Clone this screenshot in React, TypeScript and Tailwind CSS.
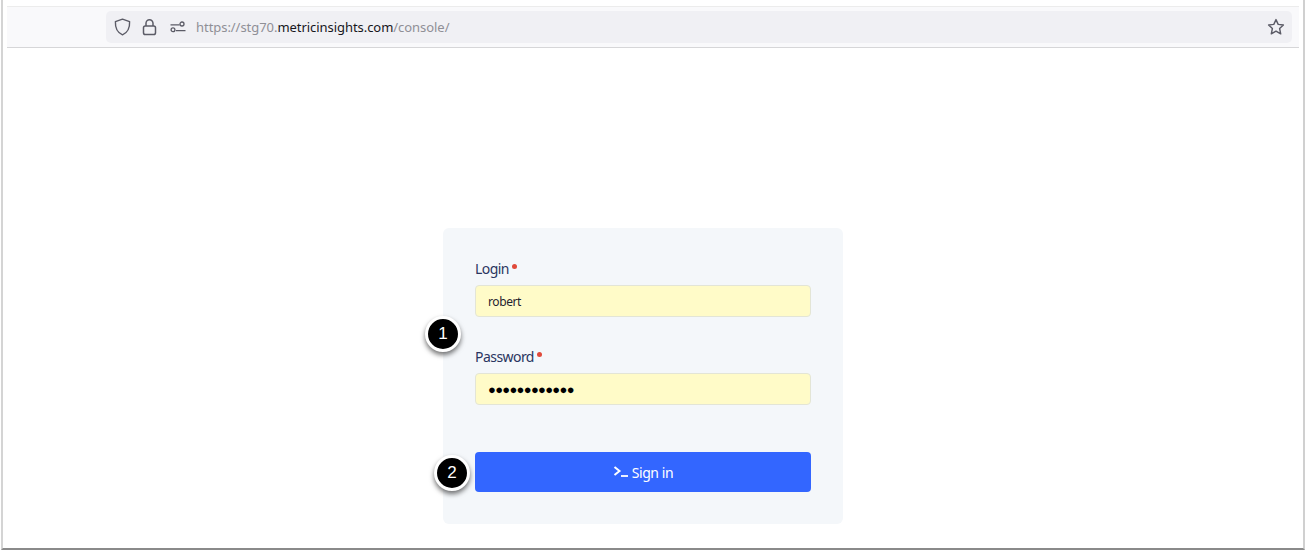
function Field({ label, value, dots }: { label: string; value: string; dots?: boolean }) {
  return (
    <div>
      <div className="flex h-[24px] items-center text-[14px] leading-[24px] tracking-[-0.55px] text-[#2a3560]">
        {label}
        <span className="ml-[3px] mb-[5px] size-[5px] rounded-full bg-[#e04a3a]" />
      </div>
      <div
        className={`mt-[4px] flex h-[32px] items-center rounded-[4px] border border-[#e3e5d6] bg-[#fffbc8] pt-[1px] pl-[12px] text-[#1f2430] ${
          dots ? "text-[13px] font-bold tracking-[-0.7px] text-black" : "text-[12px] tracking-[-0.4px]"
        }`}
      >
        {value}
      </div>
    </div>
  );
}

function Badge({ n, className }: { n: number; className: string }) {
  return (
    <div
      className={`absolute flex size-[36px] items-center justify-center rounded-full border-[3px] border-white bg-black text-[17px] text-white shadow-[0_3px_5px_rgba(0,0,0,0.55)] ${className}`}
      style={{ fontFamily: '"Liberation Sans", sans-serif' }}
    >
      {n}
    </div>
  );
}

export default function App() {
  return (
    <div className="h-[551px] w-[1306px] bg-white pl-[1px]" style={{ fontFamily: '"Noto Sans", sans-serif' }}>
      <div className="h-[550px] w-[1304px] border-r-2 border-b-2 border-l-2 border-r-[#d0d0d0] border-b-[#8a8a8a] border-l-[#d4d4d4] pt-[6px] pl-[4px] pr-[4px]">
        <div className="flex h-[42px] items-center border-t border-b border-t-[#ececec] border-b-[#d6d6d8] bg-[#f9f9fb] pr-[7px] pl-[99px]">
          <div className="flex h-[32px] flex-1 items-center rounded-[5px] bg-[#f0f0f4] pl-[8px] pr-[7px]">
            <svg width="17" height="18" viewBox="0 0 17 18" fill="none" stroke="#5b5b66" strokeWidth="1.4" strokeLinejoin="round">
              <path d="M8.5 1.2 15.6 3.6C15.9 9.8 13.6 14.6 8.5 16.8 3.4 14.6 1.1 9.8 1.4 3.6Z" />
            </svg>
            <svg width="15" height="18" viewBox="0 0 15 18" fill="none" stroke="#5b5b66" strokeWidth="1.5" strokeLinejoin="round" className="ml-[11px]">
              <path d="M4 8V5.2a3.5 3.5 0 0 1 7 0V8" />
              <rect x="1.5" y="8" width="12" height="8.5" rx="1.8" />
            </svg>
            <svg width="16" height="12" viewBox="0 0 16 12" fill="none" stroke="#5b5b66" strokeWidth="1.3" className="ml-[13px]">
              <circle cx="12" cy="3" r="2" />
              <circle cx="3" cy="8.8" r="1.9" />
              <path d="M0.5 3.8H9.5M5.8 9.6H15.5" />
            </svg>
            <div className="ml-[10px] pt-[1px] text-[13px] tracking-[-0.05px] text-[#8f8f96]">
              https://stg70.<span className="text-[#17171c]">metricinsights.com</span>/console/
            </div>
            <svg width="18" height="18" viewBox="0 0 18 18" fill="none" stroke="#5b5b66" strokeWidth="1.4" strokeLinejoin="round" className="ml-auto">
              <path d="M9 1.6 11.2 6.4 16.4 7 12.6 10.5 13.7 15.8 9 13.1 4.3 15.8 5.4 10.5 1.6 7 6.8 6.4Z" />
            </svg>
          </div>
        </div>
        <div className="pt-[180px] pl-[436px]">
          <div className="relative h-[296px] w-[400px] rounded-[6px] bg-[#f4f7fa] px-[32px] pt-[29px]">
            <Field label="Login" value="robert" />
            <div className="mt-[28px]">
              <Field label="Password" value="●●●●●●●●●●●●" dots />
            </div>
            <button className="mt-[47px] flex h-[40px] w-full items-center justify-center rounded-[4px] bg-[#3366ff] text-[14px] tracking-[-0.4px] text-white">
              <svg width="16" height="12" viewBox="0 0 16 12" fill="none" stroke="white" className="mr-[3px]">
                <path d="M1.5 1 6.5 5 1.5 9" strokeWidth="2" />
                <path d="M8 10h7" strokeWidth="1.8" />
              </svg>
              Sign in
            </button>
            <Badge n={1} className="left-[-18px] top-[88px]" />
            <Badge n={2} className="left-[-9px] top-[227px]" />
          </div>
        </div>
      </div>
    </div>
  );
}
